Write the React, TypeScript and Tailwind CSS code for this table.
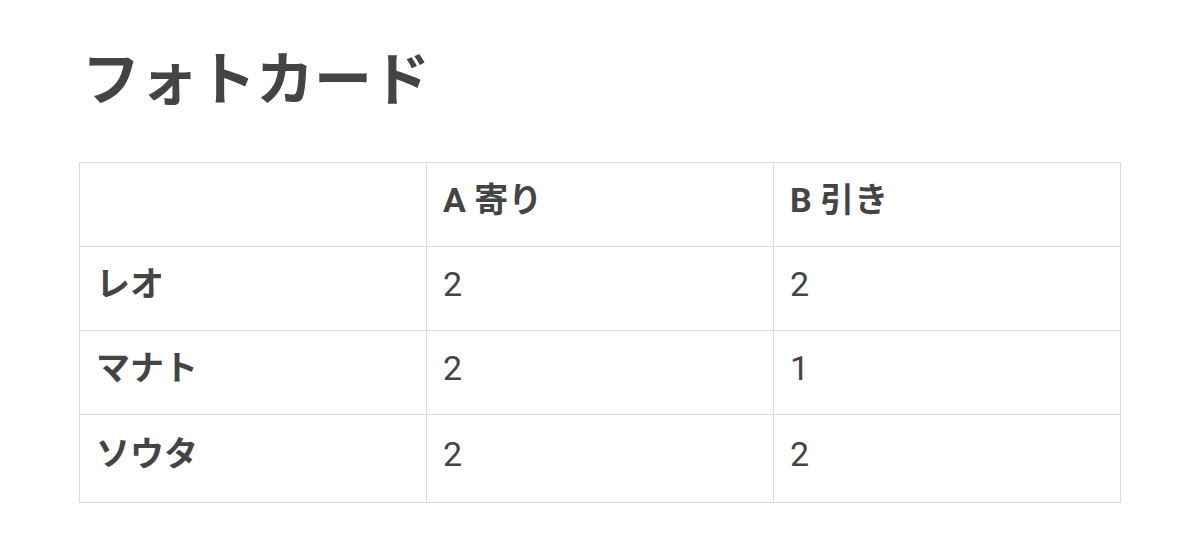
const rows = [
  { name: 'レオ', a: '2', b: '2' },
  { name: 'マナト', a: '2', b: '1' },
  { name: 'ソウタ', a: '2', b: '2' },
]

export default function App() {
  return (
    <div
      className="min-h-[551px] bg-white px-[79px] pt-[45px] text-[#444]"
      style={{ fontFamily: "Roboto, 'Noto Sans CJK JP', sans-serif" }}
    >
      <h1 className="pl-[3px] text-[58px] font-bold leading-[70px]">フォトカード</h1>
      <table className="mt-[47px] w-[1042px] table-fixed border-collapse border border-[#dcdcdc] text-[34px]">
        <thead>
          <tr className="h-[84px]">
            <th className="w-1/3 border border-[#dcdcdc] px-4 pb-[8px] text-left font-bold"></th>
            <th className="w-1/3 border border-[#dcdcdc] px-4 pb-[8px] text-left font-bold">A 寄り</th>
            <th className="w-1/3 border border-[#dcdcdc] px-4 pb-[8px] text-left font-bold">B 引き</th>
          </tr>
        </thead>
        <tbody>
          {rows.map((r, i) => (
            <tr key={r.name} className={i === rows.length - 1 ? 'h-[88px]' : 'h-[84px]'}>
              <td className="border border-[#dcdcdc] px-4 pb-[8px] font-bold">{r.name}</td>
              <td className="border border-[#dcdcdc] px-4 pb-[8px]">{r.a}</td>
              <td className="border border-[#dcdcdc] px-4 pb-[8px]">{r.b}</td>
            </tr>
          ))}
        </tbody>
      </table>
    </div>
  )
}
